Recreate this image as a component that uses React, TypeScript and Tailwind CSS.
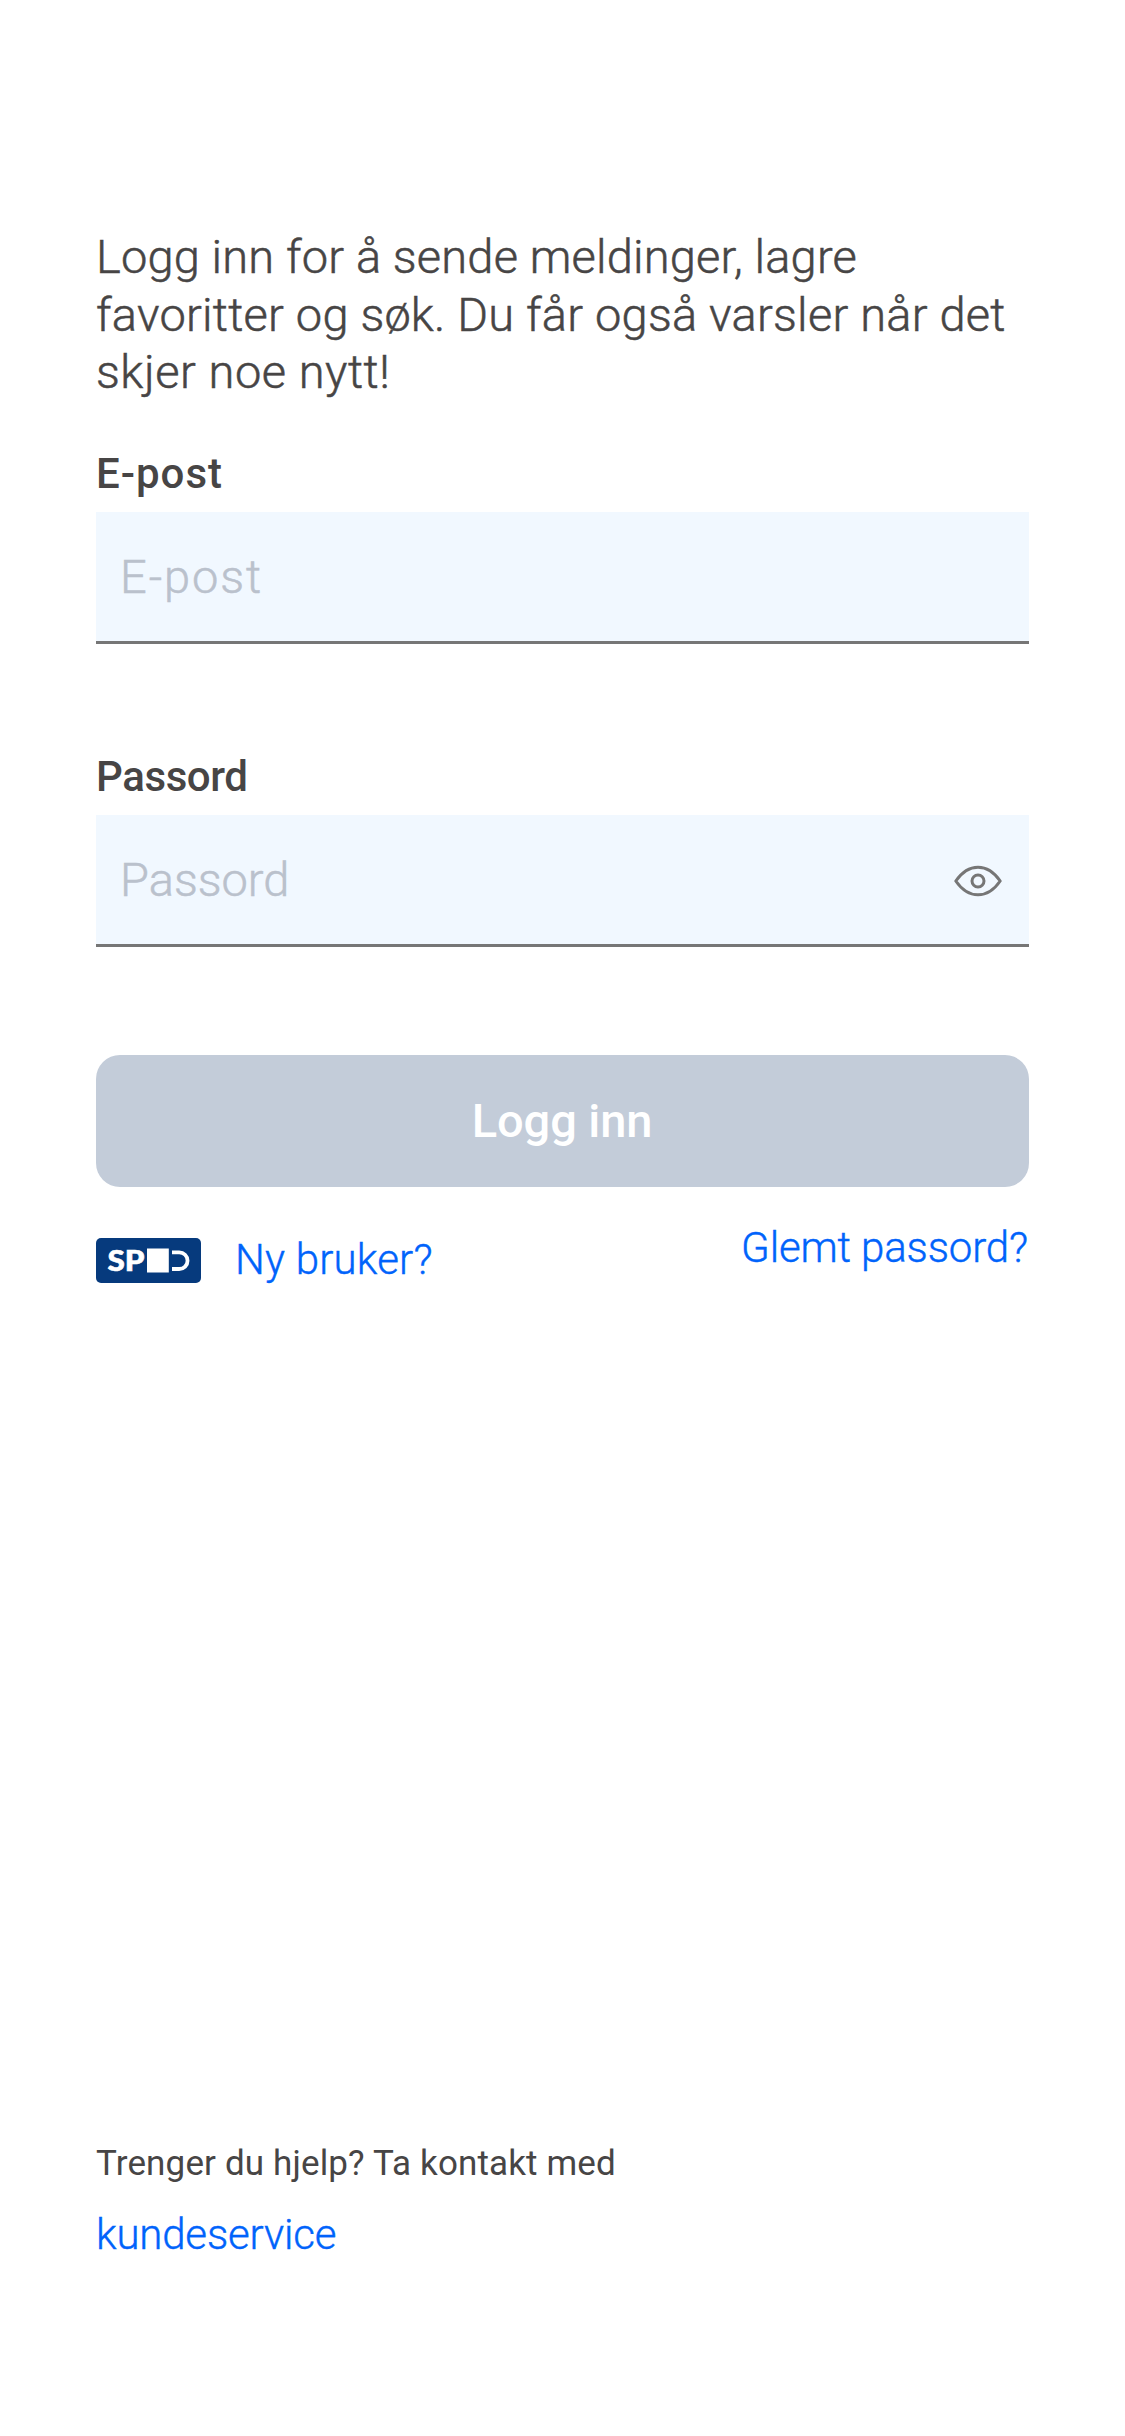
import { useState } from 'react';

function EyeIcon() {
  return (
    <svg className="mt-[2px] h-8 w-12" viewBox="0 0 48 32" fill="none" stroke="#767676" strokeWidth="3" strokeLinejoin="round">
      <path d="M1.800 16C8 7 15.500 2.200 24 2.200S40 7 46.200 16C40 25 32.500 29.800 24 29.800S8 25 1.800 16Z" />
      <circle cx="24" cy="16" r="6" />
    </svg>
  );
}

function SpidLogo() {
  return (
    <svg className="h-[45px] w-[105px]" viewBox="0 0 105 45">
      <rect width="105" height="45" rx="5" fill="#063a7d" />
      <text x="11.500" y="32.500" textLength="37" lengthAdjust="spacingAndGlyphs" fontFamily="Lato" fontWeight="900" fontSize="27.500" fill="#fff" stroke="#fff" strokeWidth="0.6">
        SP
      </text>
      <rect x="51" y="10.500" width="21.800" height="24" fill="#fff" />
      <path d="M76 14.300H83.200a8.350 8.350 0 0 1 0 16.700H76" fill="none" stroke="#fff" strokeWidth="3.800" />
    </svg>
  );
}

function Field({ label, type, tracking, labelTracking, reveal }: {
  label: string;
  type: string;
  tracking: string;
  labelTracking: string;
  reveal?: () => void;
}) {
  return (
    <label className="flex flex-col">
      <span className={`h-[62px] text-[42px] leading-[48px] font-medium ${labelTracking}`}>{label}</span>
      <span className="flex h-[132px] items-center border-b-[3px] border-[#767676] bg-[#f1f8ff] pr-[27px] pl-[24px]">
        <input
          type={type}
          placeholder={label}
          className={`h-full min-w-0 flex-1 bg-transparent text-[47px] font-light outline-none [-webkit-text-stroke:0.5px] placeholder:text-[#bac1cc] ${tracking}`}
        />
        {reveal && (
          <button type="button" aria-label="Vis passord" onClick={reveal}>
            <EyeIcon />
          </button>
        )}
      </span>
    </label>
  );
}

export default function App() {
  const [visible, setVisible] = useState(false);
  return (
    <main className="flex h-[2436px] w-[1125px] flex-col bg-white px-[96px] pt-[228px] font-['Roboto',sans-serif] text-[#474545]">
      <p className="h-[222px] text-[47px] leading-[57.500px] font-light tracking-[0.170px] [-webkit-text-stroke:0.5px]">
        Logg inn for å sende meldinger, lagre
        <br />
        <span className="tracking-[0.230px]">favoritter og søk. Du får også varsler når det</span>
        <br />
        <span className="tracking-[0.550px]">skjer noe nytt!</span>
      </p>
      <form className="flex flex-col" onSubmit={(e) => e.preventDefault()}>
        <Field label="E-post" type="text" tracking="tracking-[1.900px]" labelTracking="tracking-[1px]" />
        <div className="h-[109px]" />
        <Field
          label="Passord"
          type={visible ? 'text' : 'password'}
          tracking="tracking-[0px]"
          labelTracking="tracking-[-0.400px]"
          reveal={() => setVisible(!visible)}
        />
        <button className="mt-[108px] h-[132px] rounded-[24px] bg-[#c3ccd9] pr-px text-[47px] font-medium tracking-[-0.100px] text-white">
          Logg inn
        </button>
      </form>
      <div className="flex items-start justify-between text-[42px] leading-[48px] font-light text-[#0063fb] [-webkit-text-stroke:0.4px]">
        <div className="mt-[49px] flex">
          <span className="mt-[2px]">
            <SpidLogo />
          </span>
          <a href="#ny" className="ml-[34px] tracking-[0.200px]">Ny bruker?</a>
        </div>
        <a href="#glemt" className="mt-[37px] mr-[1px] tracking-[-0.150px]">Glemt passord?</a>
      </div>
      <footer className="mt-auto flex h-[293px] flex-col items-start">
        <p className="text-[35px] leading-[42px] tracking-[0.140px]">Trenger du hjelp? Ta kontakt med</p>
        <a href="#kundeservice" className="mt-[26px] text-[42px] leading-[48px] font-light tracking-[-0.180px] text-[#0063fb] [-webkit-text-stroke:0.4px]">
          kundeservice
        </a>
      </footer>
    </main>
  );
}
